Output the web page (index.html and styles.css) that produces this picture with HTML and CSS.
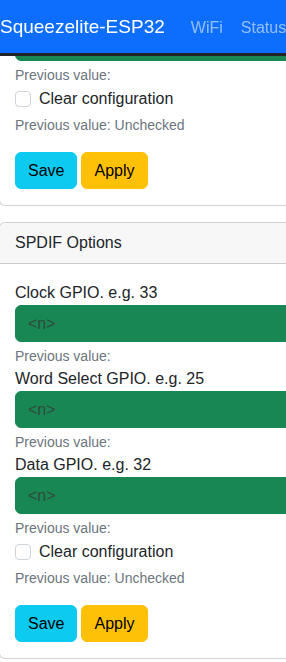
FILE: index.html
```html
<!DOCTYPE html>
<html lang="en">
<head>
    <meta charset="UTF-8">
    <meta name="viewport" content="width=device-width, initial-scale=1.0">
    <title>Squeezelite-ESP32</title>
    <link rel="stylesheet" href="styles.css">
</head>
<body>
    <nav class="navbar">
        <span class="navbar-brand">Squeezelite-ESP32</span>
        <a href="#" class="nav-link">WiFi</a>
        <a href="#" class="nav-link">Status</a>
    </nav>

    <main class="content">
        <!-- scrolled: only the end of the I2S card shows under the navbar -->
        <div class="card card-scrolled">
            <div class="card-body">
                <input type="text" class="form-control" id="i2sData" aria-label="Data GPIO. e.g. 32" placeholder="<n>">
                <div class="form-text">Previous value:</div>
                <div class="form-check">
                    <input type="checkbox" class="form-check-input" id="i2sClear">
                    <label class="form-check-label" for="i2sClear">Clear configuration</label>
                </div>
                <div class="form-text">Previous value: Unchecked</div>
                <div class="actions">
                    <button type="button" class="btn btn-info">Save</button>
                    <button type="button" class="btn btn-warning">Apply</button>
                </div>
            </div>
        </div>

        <div class="card">
            <div class="card-header">SPDIF Options</div>
            <div class="card-body">
                <label class="form-label" for="spdifClock">Clock GPIO. e.g. 33</label>
                <input type="text" class="form-control" id="spdifClock" placeholder="<n>">
                <div class="form-text">Previous value:</div>

                <label class="form-label" for="spdifWs">Word Select GPIO. e.g. 25</label>
                <input type="text" class="form-control" id="spdifWs" placeholder="<n>">
                <div class="form-text">Previous value:</div>

                <label class="form-label" for="spdifData">Data GPIO. e.g. 32</label>
                <input type="text" class="form-control" id="spdifData" placeholder="<n>">
                <div class="form-text">Previous value:</div>

                <div class="form-check">
                    <input type="checkbox" class="form-check-input" id="spdifClear">
                    <label class="form-check-label" for="spdifClear">Clear configuration</label>
                </div>
                <div class="form-text">Previous value: Unchecked</div>
                <div class="actions">
                    <button type="button" class="btn btn-info">Save</button>
                    <button type="button" class="btn btn-warning">Apply</button>
                </div>
            </div>
        </div>
    </main>
</body>
</html>
```

FILE: styles.css
```css
html, body {
    overflow-x: hidden;
}
body {
    margin: 0;
    font-family: "Liberation Sans", Arial, sans-serif;
    font-size: 16px;
    line-height: 1.5;
    color: #212529;
    background-color: #fff;
}
.navbar {
    position: fixed;
    top: 0;
    left: 0;
    right: 0;
    z-index: 10;
    height: 53px;
    display: flex;
    align-items: center;
    background-color: #0d6efd;
    border-bottom: 3px solid #212529;
    white-space: nowrap;
}
.navbar-brand {
    font-size: 19px;
    color: #fff;
    margin-right: 17px;
    padding-top: 2px;
}
.nav-link {
    color: rgba(255, 255, 255, 0.55);
    text-decoration: none;
    font-size: 16px;
    padding: 2px 9px 0;
}
.card {
    width: 330px;
    border: 1px solid rgba(0, 0, 0, 0.175);
    border-radius: 6px;
    margin-bottom: 16px;
    margin-left: -1px;
    background: #fff;
}
.card-scrolled {
    margin-top: 6px;
}
.card-header {
    padding: 8px 15px;
    background-color: #f7f7f7;
    border-bottom: 1px solid rgba(0, 0, 0, 0.175);
    border-radius: 6px 6px 0 0;
}
.card-body {
    padding: 17px 15px 16px;
}
.form-label {
    display: block;
}
.form-control {
    display: block;
    width: 100%;
    height: 37px;
    box-sizing: border-box;
    padding: 0 12px;
    font-family: inherit;
    font-size: 16px;
    background-color: #198754;
    border: 1px solid #198754;
    border-radius: 6px;
    color: #fff;
}
.form-control::placeholder {
    color: #2f4a3b;
}
.form-text {
    margin-top: 4px;
    font-size: 14px;
    color: #6c757d;
}
.form-check {
    display: flex;
    align-items: flex-start;
    min-height: 24px;
    margin: 1px 0 4px;
}
.form-check-input {
    appearance: none;
    width: 16px;
    height: 16px;
    margin: 4px 8px 0 0;
    border: 1px solid #ced4da;
    border-radius: 4px;
    background: #fff;
}
.actions {
    display: flex;
    gap: 4px;
    margin-top: 16px;
}
.btn {
    height: 37px;
    padding: 0 12px;
    font-family: inherit;
    font-size: 16px;
    color: #000;
    border: 1px solid transparent;
    border-radius: 6px;
    cursor: pointer;
}
.btn-info {
    background-color: #0dcaf0;
    border-color: #0dcaf0;
}
.btn-warning {
    background-color: #ffc107;
    border-color: #ffc107;
}
```
